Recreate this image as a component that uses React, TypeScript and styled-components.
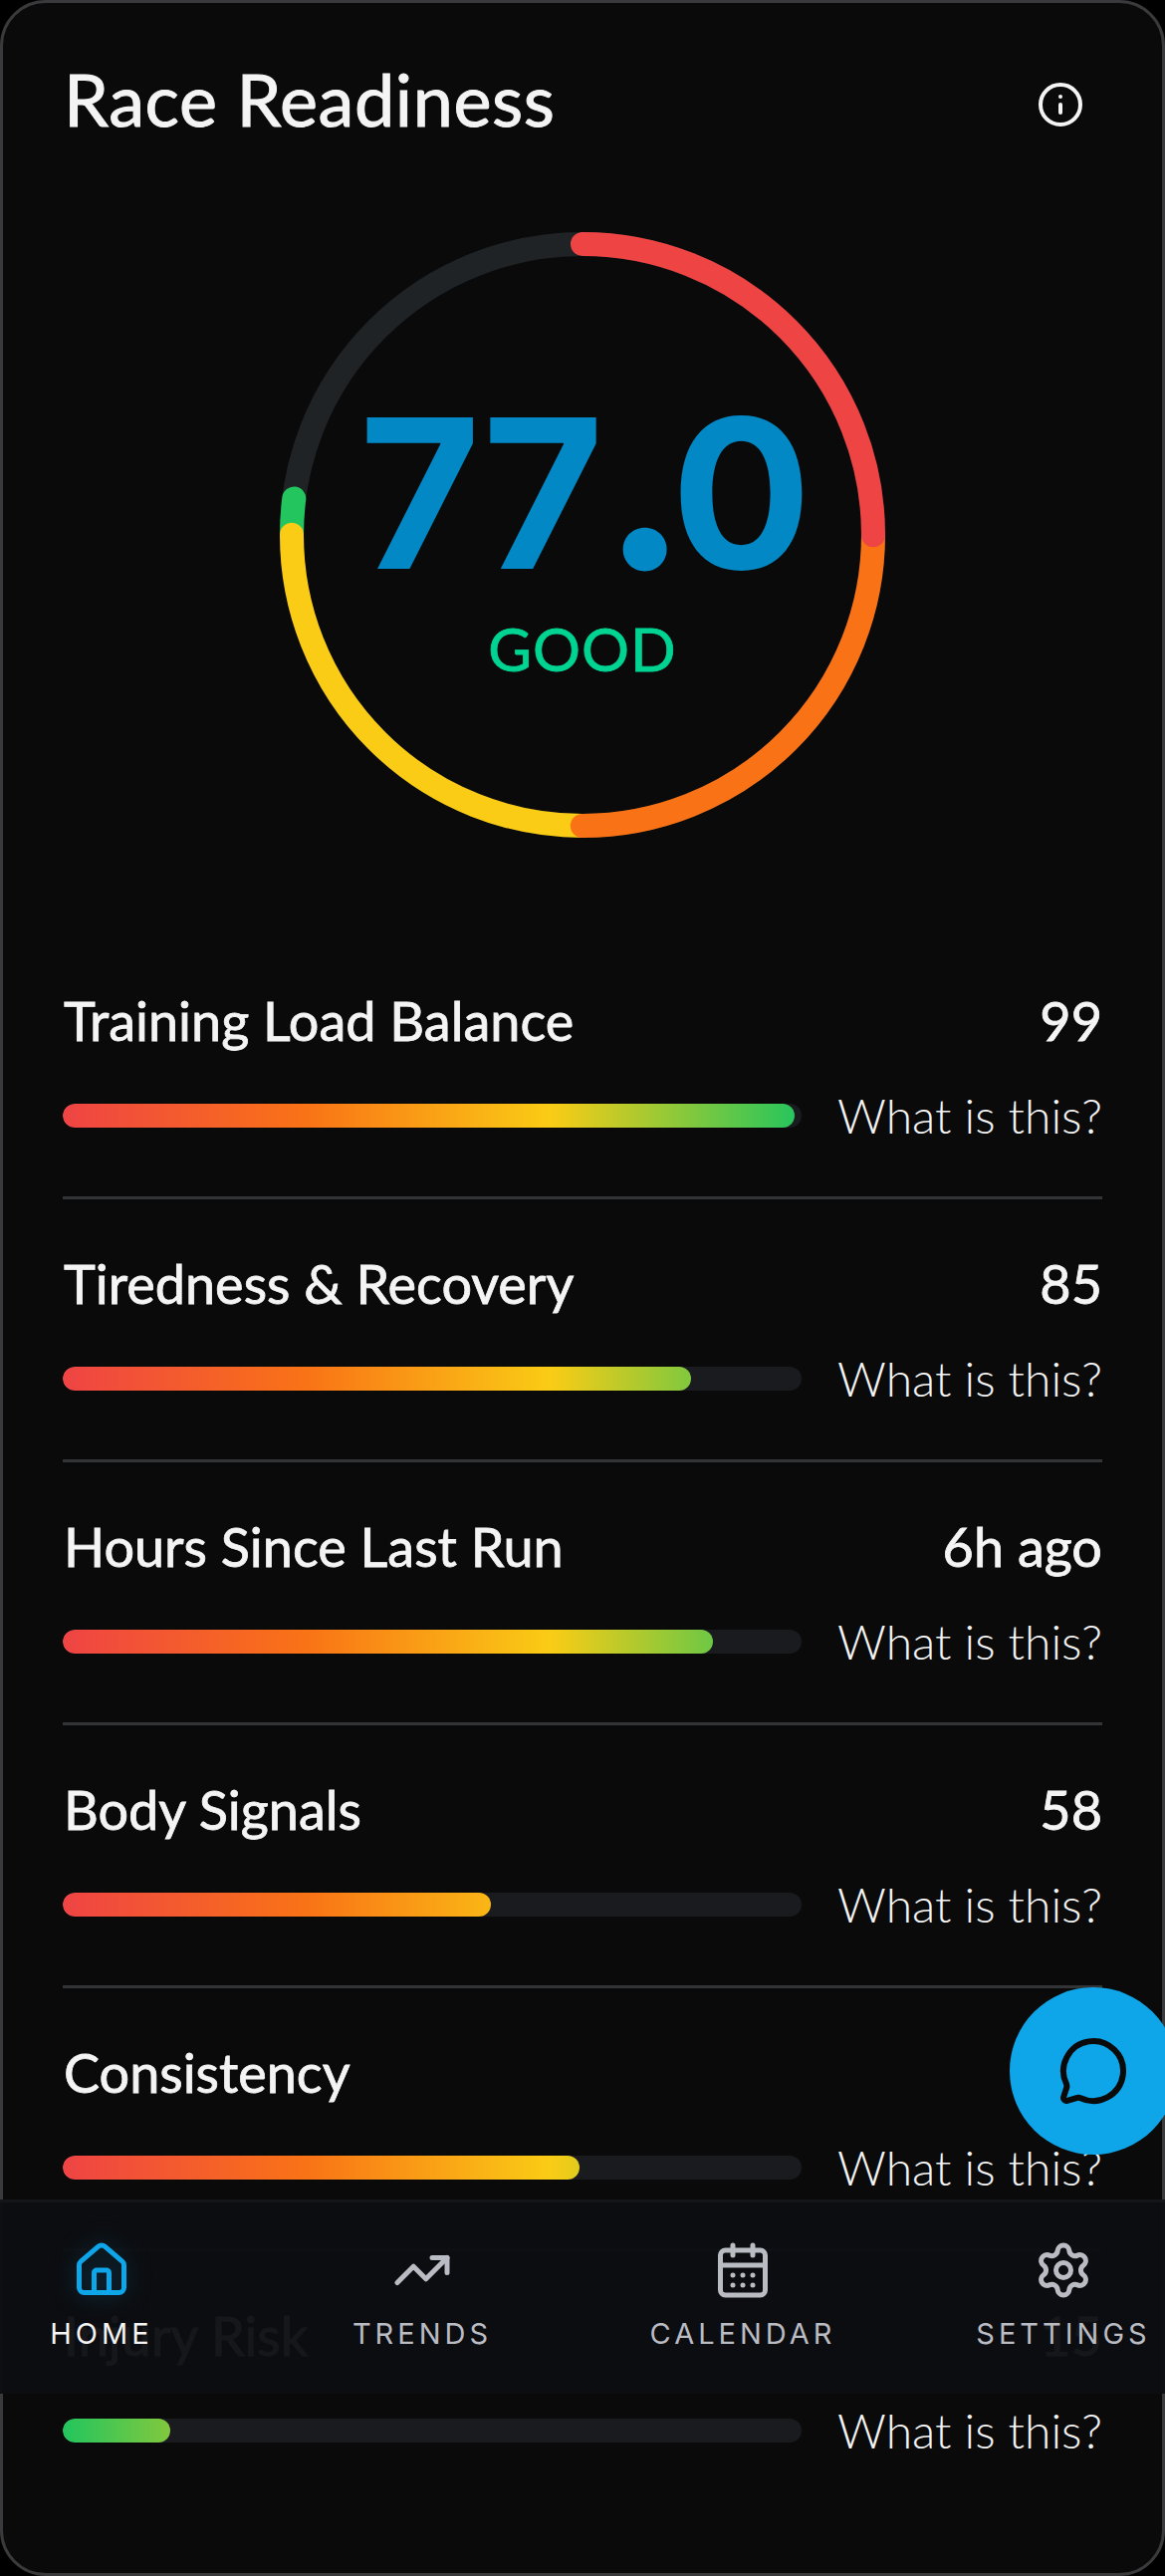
import React from 'react';
import styled, { createGlobalStyle } from 'styled-components';
import { CalendarDays, House, Info, MessageCircle, Settings, TrendingUp } from 'lucide-react';

const GlobalStyle = createGlobalStyle`
  html, body { margin: 0; padding: 0; background: #000; }
  #root { width: 1170px; height: 2586px; overflow: hidden; }
  * { box-sizing: border-box; }
`;

const Screen = styled.div`
  position: relative;
  width: 1170px;
  height: 2586px;
  overflow: hidden;
  background: #000;
  font-family: 'Lato', 'Liberation Sans', sans-serif;
`;

const Card = styled.main`
  height: 100%;
  padding: 42px 60px 0;
  background: #0a0a0a;
  border: 3px solid #3a3a3c;
  border-radius: 46px;
  color: #f4f4f5;
`;

const Header = styled.header`
  display: flex;
  align-items: center;
  justify-content: space-between;
  height: 108px;
  padding-right: 18px;
`;

const Title = styled.h1`
  margin: 0 0 0 1px;
  font-size: 72px;
  font-weight: 400;
  line-height: 108px;
  letter-spacing: 0.6px;
  -webkit-text-stroke: 1px currentColor;
`;

const InfoIcon = styled(Info)`
  margin-top: 12px;
`;

const RingBox = styled.section`
  position: relative;
  width: 608px;
  height: 608px;
  margin: 80px auto 99px;
`;

const RingCopy = styled.div`
  position: absolute;
  inset: 0;
  display: flex;
  flex-direction: column;
  align-items: center;
  padding-top: 156px;
`;

const Score = styled.div`
  margin-left: 4px;
  font-family: 'Inter', 'Liberation Sans', sans-serif;
  font-size: 209px;
  font-weight: 700;
  line-height: 212px;
  letter-spacing: -2px;
  color: #0288c5;
`;

const ScorePoint = styled.span`
  margin: 0 -15px 0 0;
  font-size: 260px;
  line-height: 0;
`;

const Grade = styled.div`
  margin-top: 14px;
  font-size: 60px;
  line-height: 72px;
  letter-spacing: 1px;
  -webkit-text-stroke: 0.8px currentColor;
  color: #00d492;
`;

const Row = styled.article<{ $last?: boolean }>`
  padding: 44px 0 45px;
  border-bottom: 3px solid ${p => (p.$last ? 'transparent' : '#333436')};
`;

const RowHead = styled.div`
  display: flex;
  justify-content: space-between;
  height: 81px;
  margin-bottom: 19px;
  padding-left: 1px;
  font-size: 54px;
  font-weight: 400;
  line-height: 81px;
  -webkit-text-stroke: 0.8px currentColor;
`;

const RowBody = styled.div`
  display: flex;
  align-items: center;
  justify-content: space-between;
  height: 72px;
`;

const Track = styled.div`
  width: 742px;
  height: 24px;
  overflow: hidden;
  background: #1a1b1e;
  border-radius: 12px;
`;

const Fill = styled.div<{ $inverted?: boolean }>`
  height: 100%;
  border-radius: 12px;
  background-image: linear-gradient(
    90deg,
    ${p =>
      p.$inverted
        ? '#22c55e 0%, #facc15 33%, #f97316 66%, #ef4444 100%'
        : '#ef4444 0%, #f97316 33%, #facc15 66%, #22c55e 100%'}
  );
  background-size: 742px 100%;
`;

const Explain = styled.span`
  font-size: 48px;
  font-weight: 300;
  line-height: 72px;
  white-space: nowrap;
`;

const Fab = styled.button`
  position: absolute;
  left: 1014px;
  top: 1995px;
  display: flex;
  align-items: center;
  justify-content: center;
  width: 168px;
  height: 168px;
  padding: 0;
  border: 0;
  border-radius: 50%;
  background: #0ea5e9;
  color: #0a0a0a;
`;

const NavBar = styled.nav`
  position: absolute;
  left: 0;
  right: 0;
  top: 2208px;
  height: 195px;
  padding-top: 38px;
  display: grid;
  grid-template-columns: repeat(4, 322px);
  justify-content: center;
  align-content: start;
  background: rgba(12, 14, 17, 0.96);
  border-top: 3px solid #131518;
  font-family: 'Inter', 'Liberation Sans', sans-serif;
`;

const NavItem = styled.a<{ $active?: boolean }>`
  display: flex;
  flex-direction: column;
  align-items: center;
  gap: 16px;
  color: ${p => (p.$active ? '#0ea5e9' : '#babcc4')};

  svg {
    filter: ${p => (p.$active ? 'drop-shadow(0 0 12px rgba(14, 165, 233, 0.3))' : 'none')};
  }
`;

const NavLabel = styled.span<{ $active?: boolean }>`
  font-size: 29px;
  line-height: 36px;
  letter-spacing: 4px;
  color: ${p => (p.$active ? '#f4f4f5' : '#babcc4')};
`;

const RING_RADIUS = 292;
const RING_LENGTH = 2 * Math.PI * RING_RADIUS;

// Painted in this order so each arc's round cap sits over the arc before it.
const arcs = [
  { color: '#22c55e', from: 270, to: 277.2 },
  { color: '#facc15', from: 180, to: 270 },
  { color: '#f97316', from: 90, to: 180 },
  { color: '#ef4444', from: 0, to: 90 },
];

const ScoreRing = () => (
  <svg width="608" height="608" viewBox="0 0 608 608">
    <circle cx="304" cy="304" r={RING_RADIUS} fill="none" stroke="#1f2326" strokeWidth="24" />
    {arcs.map(arc => (
      <circle
        key={arc.color}
        cx="304"
        cy="304"
        r={RING_RADIUS}
        fill="none"
        stroke={arc.color}
        strokeWidth="24"
        strokeLinecap="round"
        strokeDasharray={`${((arc.to - arc.from) / 360) * RING_LENGTH} ${RING_LENGTH}`}
        transform={`rotate(${arc.from - 90} 304 304)`}
      />
    ))}
  </svg>
);

const metrics = [
  { name: 'Training Load Balance', value: '99', percent: 99 },
  { name: 'Tiredness & Recovery', value: '85', percent: 85 },
  { name: 'Hours Since Last Run', value: '6h ago', percent: 88 },
  { name: 'Body Signals', value: '58', percent: 58 },
  { name: 'Consistency', value: '70', percent: 70 },
  { name: 'Injury Risk', value: '15', percent: 14.6, inverted: true },
];

const tabs = [
  { label: 'HOME', Icon: House, active: true },
  { label: 'TRENDS', Icon: TrendingUp },
  { label: 'CALENDAR', Icon: CalendarDays },
  { label: 'SETTINGS', Icon: Settings },
];

export default function App() {
  return (
    <Screen>
      <GlobalStyle />
      <Card>
        <Header>
          <Title>Race Readiness</Title>
          <InfoIcon size={48} strokeWidth={2} />
        </Header>
        <RingBox>
          <ScoreRing />
          <RingCopy>
            <Score>
              77<ScorePoint>.</ScorePoint>0
            </Score>
            <Grade>GOOD</Grade>
          </RingCopy>
        </RingBox>
        {metrics.map((m, i) => (
          <Row key={m.name} $last={i === metrics.length - 1}>
            <RowHead>
              <span>{m.name}</span>
              <span>{m.value}</span>
            </RowHead>
            <RowBody>
              <Track>
                <Fill $inverted={m.inverted} style={{ width: `${m.percent}%` }} />
              </Track>
              <Explain>What is this?</Explain>
            </RowBody>
          </Row>
        ))}
      </Card>
      <NavBar>
        {tabs.map(({ label, Icon, active }) => (
          <NavItem key={label} $active={active}>
            <Icon size={60} strokeWidth={2} />
            <NavLabel $active={active}>{label}</NavLabel>
          </NavItem>
        ))}
      </NavBar>
      <Fab aria-label="Open chat">
        <MessageCircle size={72} strokeWidth={2} />
      </Fab>
    </Screen>
  );
}
